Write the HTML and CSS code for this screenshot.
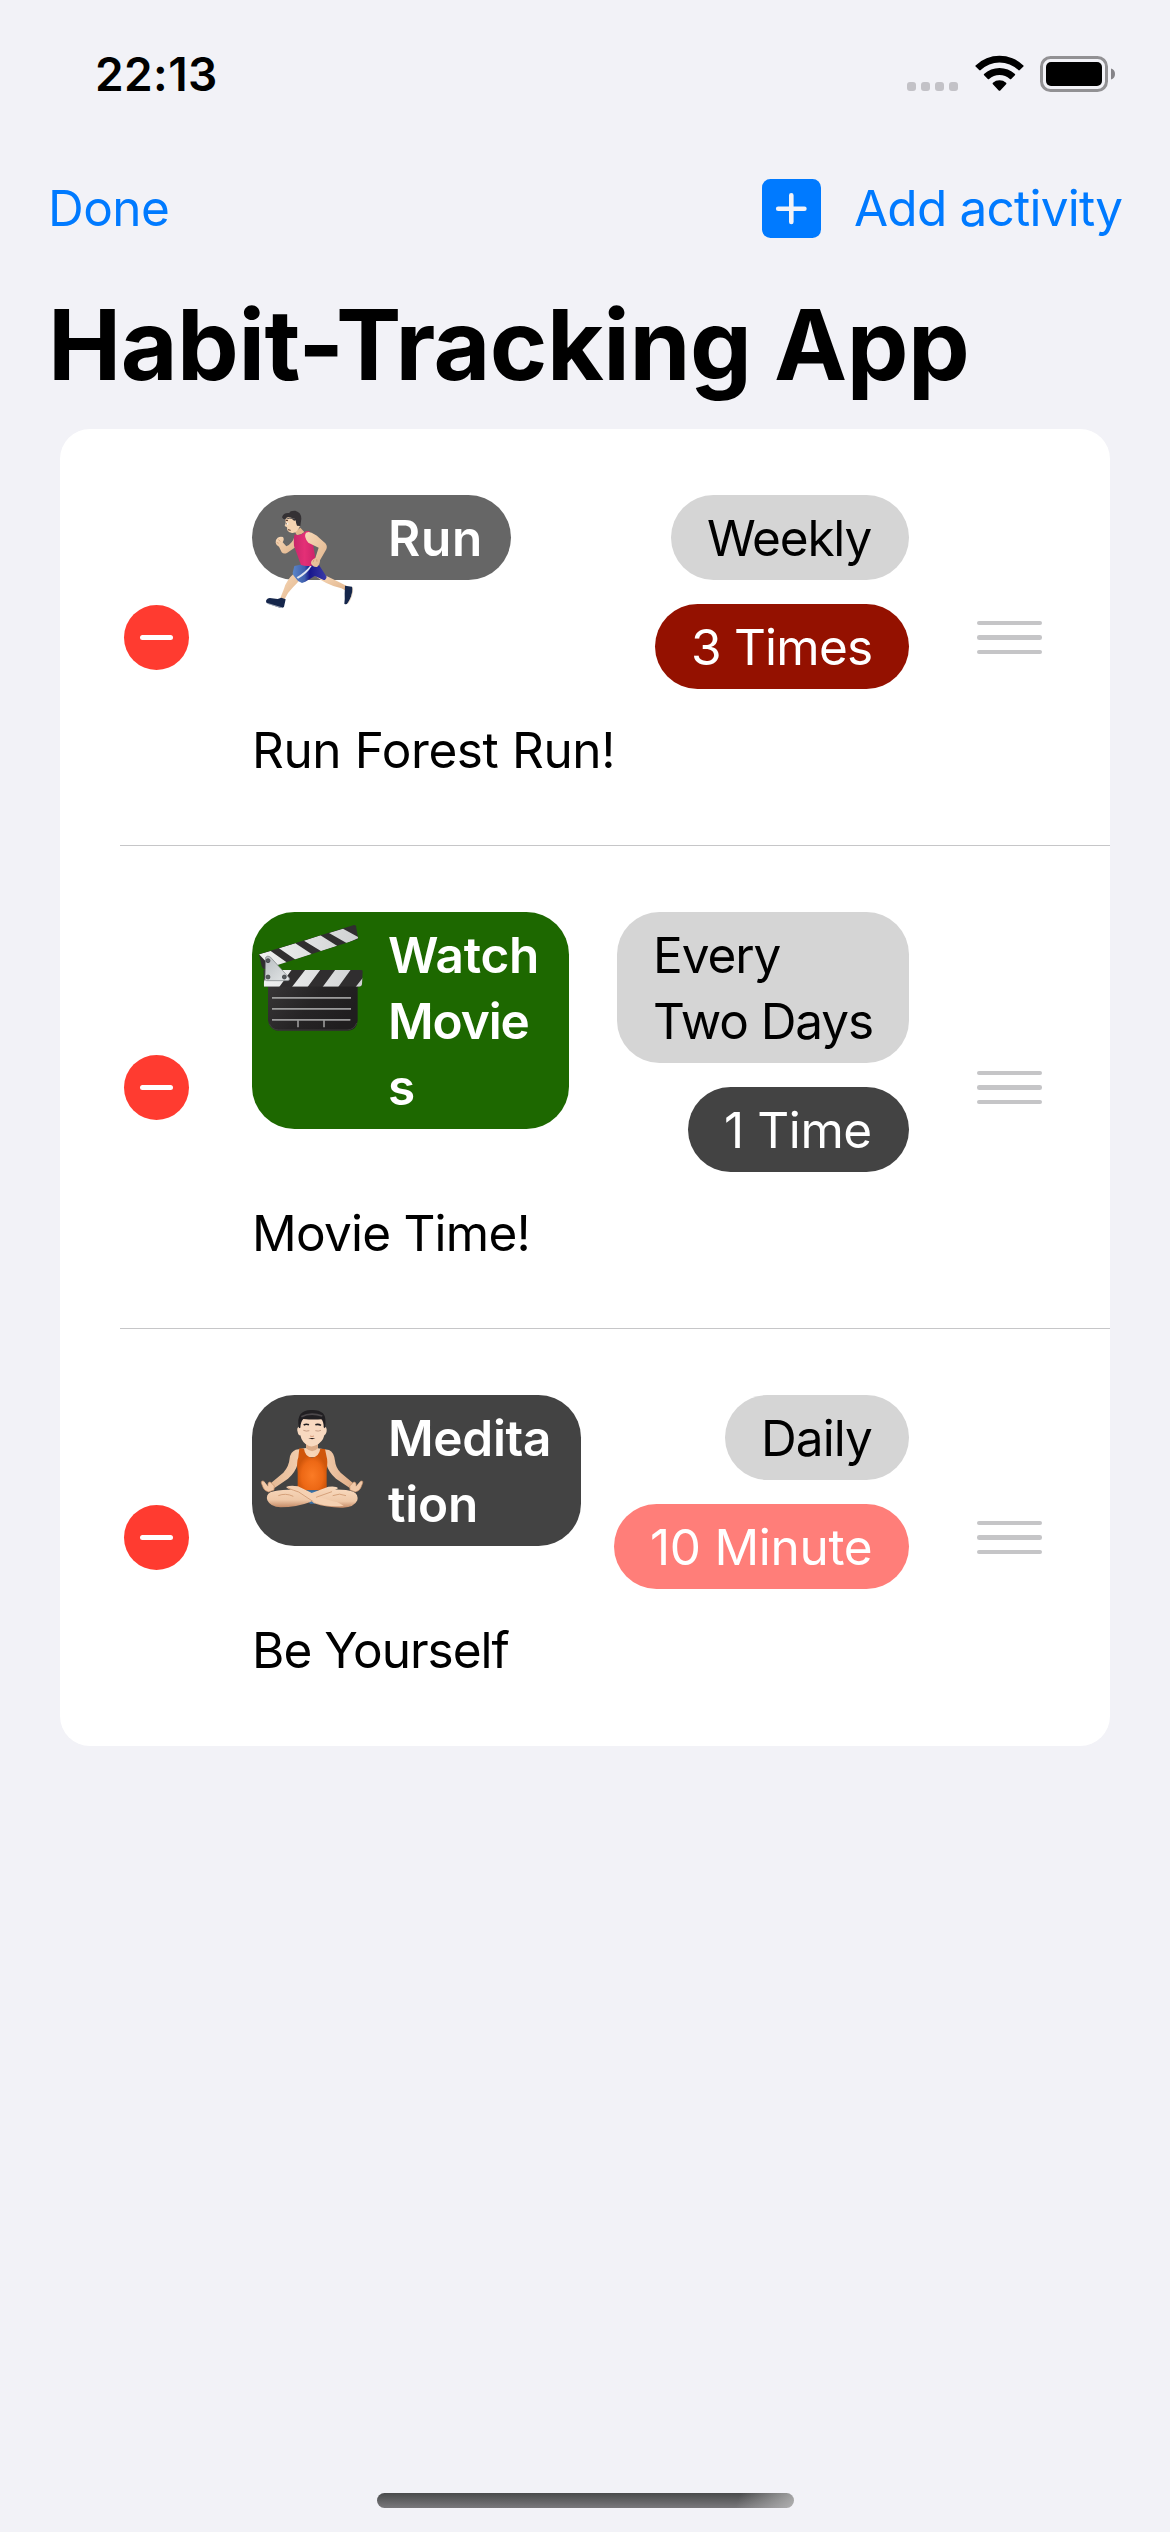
FILE: index.html
```html
<!DOCTYPE html>
<html lang="en">
<head>
<meta charset="utf-8">
<title>Habit-Tracking App</title>
<link rel="stylesheet" href="styles.css">
</head>
<body>
<div class="screen">
  <header class="status">
    <span class="time">22:13</span>
    <span class="dots"><i></i><i></i><i></i><i></i></span>
    <svg class="wifi" viewBox="0 0 49 36" width="49" height="36">
      <path d="M0.6 10.4Q0 11 .6 11.6L4.2 15.1Q5 15.7 5.7 15.1A27 27 0 0 1 43.300 15.100Q44 15.700 44.800 15.100L48.400 11.600Q49 11 48.400 10.400A34.500 34.500 0 0 0 .6 10.400Z"/>
      <path d="M9 19Q8.500 19.700 9.100 20.300L12.800 23.900Q13.400 24.500 14.100 23.900A15.500 15.500 0 0 1 34.900 23.900Q35.600 24.500 36.200 23.900L39.900 20.300Q40.500 19.700 40 19A22.800 22.800 0 0 0 9 19Z"/>
      <path d="M17.900 27.700Q17.200 28.500 17.900 29.200L23.700 35.400Q24.500 36.200 25.300 35.400L31.100 29.200Q31.800 28.500 31.100 27.700A10.500 10.500 0 0 0 17.900 27.700Z"/>
    </svg>
    <svg class="battery" viewBox="0 0 75 36" width="75" height="36">
      <rect x="1.500" y="1.500" width="65" height="33" rx="9" fill="none" stroke="#929194" stroke-width="3"/>
      <rect x="6" y="6" width="56" height="24" rx="5"/>
      <path d="M71 12.500Q75 13.800 75 18T71 23.500Z" fill="#858488"/>
    </svg>
  </header>

  <nav class="toolbar">
    <a class="done">Done</a>
    <svg class="plus" viewBox="0 0 59 59" width="59" height="59">
      <rect width="59" height="59" rx="8.500" fill="#007aff"/>
      <path d="M16.200 29.700H42.400M29.300 16.300V43" stroke="#f2f2f7" stroke-width="4.600" stroke-linecap="round"/>
    </svg>
    <a class="add">Add activity</a>
  </nav>

  <h1 class="title">Habit-Tracking App</h1>

  <main class="card">
    <section class="row">
      <span class="remove"></span>
      <div class="body">
        <div class="top">
          <div class="pill name name-run">
            <svg class="emoji" viewBox="36 45 345 345" width="115" height="115">
              <defs>
                <linearGradient id="skin" x1="0" x2="1" y1="0" y2="1"><stop offset="0" stop-color="#f8d9b8"/><stop offset="1" stop-color="#e0b48c"/></linearGradient>
                <linearGradient id="pink" x1="0" x2="1"><stop offset="0" stop-color="#c8276b"/><stop offset=".5" stop-color="#e42f76"/><stop offset="1" stop-color="#cd246a"/></linearGradient>
                <linearGradient id="shorts" x1="0" x2="1"><stop offset="0" stop-color="#5b86c8"/><stop offset=".35" stop-color="#3f5fae"/><stop offset=".5" stop-color="#17178c"/><stop offset="1" stop-color="#3c3ca8"/></linearGradient>
              </defs>
              <path d="M225 287Q256 313 304 325L318 332 322 319Q286 300 258 287Z" fill="url(#skin)"/>
              <path d="M164 278Q139 300 132 326L121 354 133 359Q144 336 159 322 171 311 183 294Z" fill="url(#skin)"/>
              <path d="M163 171Q158 190 139 199L128 187Q134 178 129 171 121 168 113 173 105 180 107 188 109 197 117 200L125 217Q132 224 142 218L166 202Z" fill="url(#skin)"/>
              <path d="M163 152Q174 151 181 143L193 156Q183 166 170 165Z" fill="#e4b88f"/>
              <path d="M163 258L158 279 160 286 174 303 186 309 196 305 224 288 251 300Q258 300 260 290L237 255Q200 247 163 258Z" fill="url(#shorts)"/>
              <path d="M210 258Q196 276 170 292L174 296Q202 281 215 258Z" fill="#dfe5f2"/>
              <path d="M164 163Q170 167 181 164 192 160 197 154L208 153 217 180 226 233Q227 253 214 257 197 259 183 255L162 198Q160 176 164 163Z" fill="url(#pink)"/>
              <path d="M206 156Q224 160 238 174L256 190Q263 198 259 208L240 241Q240 255 231 261 217 262 213 250 213 239 226 234L236 203 205 188Q190 170 198 158Z" fill="url(#skin)"/>
              <path d="M139 107Q135 119 137 129L134 138 141 142 142 151Q147 160 158 159 172 158 180 138L174 115Z" fill="#f6d5b2"/>
              <path d="M126 112Q130 97 148 99 150 91 166 92 184 97 184 116L181 138 171 137Q168 132 167 121 160 125 154 113 142 109 137 116 131 121 126 112Z" fill="#343134"/>
              <path d="M139 117Q147 113 164 116" fill="none" stroke="#5c5859" stroke-width="3"/>
              <path d="M137 121L144 122M144 149L152 151" stroke="#5a3427" stroke-width="3"/>
              <circle cx="142" cy="131" r="3" fill="#fff"/><circle cx="140" cy="131" r="1.500" fill="#432b23"/>
              <path d="M79 360Q84 352 95 355L113 357 124 353 137 358 132 380Q128 386 115 382L83 371Q76 367 79 360Z" fill="#15264b"/>
              <path d="M81 370L128 384" stroke="#d8dce2" stroke-width="2"/>
              <path d="M315 317L336 320Q340 326 337 336 335 350 326 365 319 377 313 371 315 355 314 341Z" fill="#15264b"/>
              <path d="M338 322Q340 348 323 371" fill="none" stroke="#e3cbb0" stroke-width="2"/>
              <path d="M115 179L121 184M110 187L116 190M222 239L219 247M230 238L231 245" stroke="#c79169" stroke-width="2"/>
            </svg>
            Run
          </div>
          <div class="tags">
            <div class="pill tag-weekly">Weekly</div>
            <div class="pill tag-3">3 Times</div>
          </div>
        </div>
        <p class="desc desc-run">Run Forest Run!</p>
      </div>
      <span class="handle"><i></i><i></i><i></i></span>
    </section>

    <section class="row">
      <span class="remove"></span>
      <div class="body">
        <div class="top">
          <div class="pill name name-movie">
            <svg class="emoji" viewBox="36 36 345 360" width="115" height="120">
              <defs>
                <linearGradient id="board" x1="0" x2="1" y1="0" y2=".4"><stop offset="0" stop-color="#383637"/><stop offset=".55" stop-color="#262425"/><stop offset="1" stop-color="#201e1f"/></linearGradient>
                <linearGradient id="white" x1="0" x2="1"><stop offset="0" stop-color="#f0f1f1"/><stop offset="1" stop-color="#cfd1d2"/></linearGradient>
                <linearGradient id="steel" x1="0" x2="1" y1="0" y2="1"><stop offset="0" stop-color="#b8bdc0"/><stop offset="1" stop-color="#e4e7e8"/></linearGradient>
                <clipPath id="arm"><path d="M57 163L342 75Q346 74 348 79L355 117 73 208Q68 206 65 198Z"/></clipPath>
                <clipPath id="slate"><path d="M70 210H364Q369 210 368 215L366 253Q365 260 358 260H72Z"/></clipPath>
              </defs>
              <path d="M84 255H353V362Q350 391 323 392H113Q87 389 84 361Z" fill="url(#board)"/>
              <path d="M88 371Q96 390 116 390H321Q343 389 350 369" fill="none" stroke="#494748" stroke-width="2"/>
              <g clip-path="url(#arm)">
                <rect x="50" y="65" width="315" height="150" fill="#302e2f"/>
                <path d="M57 163L92 153 144 190 100 208ZM117 145L166 130 216 163 167 179ZM192 122L241 106 292 138 244 154ZM267 99L309 86 358 113 321 130Z" fill="url(#white)"/>
              </g>
              <g clip-path="url(#slate)">
                <rect x="68" y="208" width="304" height="54" fill="#302e2f"/>
                <path d="M85 208H156L117 262H66ZM197 208H242L202 262H155ZM287 208H333L294 262H247ZM371 230V262H346Z" fill="url(#white)"/>
              </g>
              <path d="M77 172Q83 165 91 171L148 234Q151 242 142 242H80Q75 242 75 237Z" fill="url(#steel)" stroke="#777c7f" stroke-width="2"/>
              <g fill="#555a5d" stroke="#303437" stroke-width="2"><circle cx="84" cy="182" r="6"/><circle cx="84" cy="231" r="6"/><circle cx="133" cy="231" r="6"/></g>
              <path d="M96 294H333M96 327H333M96 360H331M174 360V382M252 360V382" stroke="#979696" stroke-width="5"/>
              <path d="M96 293H333M96 326H333M96 359H331" stroke="#b8b8b8" stroke-width="2"/>
            </svg>
            <span class="line1">Watch</span><br><span class="line2">Movie</span><br>s
          </div>
          <div class="tags">
            <div class="pill tag-every">Every<br>Two Days</div>
            <div class="pill tag-1">1 Time</div>
          </div>
        </div>
        <p class="desc desc-movie">Movie Time!</p>
      </div>
      <span class="handle"><i></i><i></i><i></i></span>
    </section>

    <section class="row">
      <span class="remove"></span>
      <div class="body">
        <div class="top">
          <div class="pill name name-meditation">
            <svg class="emoji" viewBox="36 45 345 345" width="115" height="115">
              <defs>
                <linearGradient id="leg" x1="0" x2="0" y1="0" y2="1"><stop offset="0" stop-color="#f8d8bc"/><stop offset=".65" stop-color="#efc8a7"/><stop offset="1" stop-color="#c48a66"/></linearGradient>
                <linearGradient id="arms" x1="0" x2="1"><stop offset="0" stop-color="#e3b792"/><stop offset=".5" stop-color="#f8d6b8"/><stop offset="1" stop-color="#dfac86"/></linearGradient>
                <radialGradient id="orange" cx=".5" cy=".65"><stop offset="0" stop-color="#fb7b25"/><stop offset=".7" stop-color="#ed6815"/><stop offset="1" stop-color="#d0560b"/></radialGradient>
              </defs>
              <path d="M198 184H234V205L267 210Q282 217 285 242 287 263 302 278L347 316 335 328 288 296Q266 278 258 249L246 232H186L174 249Q166 278 144 296L98 328 85 316 130 278Q147 260 149 235 151 216 167 209L198 204Z" fill="url(#arms)"/>
              <path d="M72 304Q63 300 64 309L69 322Q73 333 86 336L102 330 103 318 91 306Q82 305 84 319M361 304Q370 300 368 309L363 322Q359 333 346 336L330 330 329 318 341 306Q350 305 348 319" fill="#f2c9a8" stroke="#c18c67" stroke-width="2"/>
              <path d="M178 205L192 206Q195 230 216 233 237 230 241 206L255 207 260 231Q264 242 260 272V331H173V277Q169 246 175 232Z" fill="url(#orange)"/>
              <path d="M202 331H232L238 350 224 371H210L194 347Z" fill="#3770a7"/>
              <path d="M262 330Q312 326 340 335 356 343 352 361 343 382 309 383 263 384 222 370L203 354 246 330Z" fill="url(#leg)"/>
              <path d="M170 330Q119 326 91 337 77 345 82 361 91 381 122 382 169 382 211 366L233 350 275 336 294 325Q290 317 265 320L207 342Z" fill="url(#leg)"/>
              <path d="M138 321Q151 314 174 319L211 337Q248 358 293 367L311 377Q263 383 218 365L171 335Q145 329 138 321Z" fill="#f5d1b2"/>
              <path d="M144 324Q160 331 176 336L220 365M228 352L276 335M115 347Q136 338 160 349M318 347Q299 338 278 347" fill="none" stroke="#cf9870" stroke-width="2.500"/>
              <path d="M198 186Q215 207 234 186V205Q217 222 198 205Z" fill="#dcab87"/>
              <path d="M177 140Q169 143 173 156 175 167 181 166 186 190 207 198 217 201 228 196 248 187 253 166 261 160 260 148 259 140 254 141L251 115H182Z" fill="#f8d9c0"/>
              <path d="M177 145Q171 114 182 102 194 89 215 90 237 89 249 100 260 112 255 145L251 142Q251 124 244 118 219 120 190 117 182 125 181 143Z" fill="#211f22"/>
              <path d="M184 110Q212 96 247 108" fill="none" stroke="#4c484b" stroke-width="5"/>
              <path d="M191 135Q198 131 207 134M226 134Q235 131 243 136" fill="none" stroke="#242022" stroke-width="5"/>
              <path d="M190 151Q199 155 208 152M226 152Q235 155 243 151" fill="none" stroke="#ad7f67" stroke-width="2"/>
              <path d="M210 168Q216 171 222 168" fill="none" stroke="#d89b78" stroke-width="3"/>
              <path d="M205 175Q216 173 226 175 217 180 205 175Z" fill="#251817"/>
            </svg>
            <span class="line1">Medita</span><br>tion
          </div>
          <div class="tags">
            <div class="pill tag-daily">Daily</div>
            <div class="pill tag-10">10 Minute</div>
          </div>
        </div>
        <p class="desc desc-meditation">Be Yourself</p>
      </div>
      <span class="handle"><i></i><i></i><i></i></span>
    </section>
  </main>

  <div class="home"></div>
</div>
</body>
</html>
```
FILE: styles.css
```css
* { box-sizing: border-box; margin: 0; }

body {
  background: #f2f2f7;
  color: #000;
  font: 400 49.5px/66px Inter, "Liberation Sans", sans-serif;
}

.screen {
  display: flex;
  flex-direction: column;
  width: 1170px;
  height: 2532px;
}

/* status bar */
.status {
  display: flex;
  align-items: flex-start;
  height: 141px;
  padding: 55px 55px 0 95px;
}
.time {
  flex: 1;
  font-size: 46px;
  font-weight: 600;
  line-height: 39px;
  letter-spacing: .39px;
}
.dots { display: flex; gap: 5px; padding-top: 27px; margin-right: 17px; }
.dots i { width: 9px; height: 9px; border-radius: 3px; background: #c3c2c7; }
.wifi { margin-right: 16px; }
.battery { margin-top: 1px; }

/* navigation */
.toolbar {
  display: flex;
  align-items: center;
  height: 134px;
  padding: 0 47px 0 48px;
  color: #007aff;
}
.done { flex: 1; letter-spacing: -.52px; }
.plus { margin-right: 33px; }
.add { width: 269px; white-space: nowrap; letter-spacing: -.78px; }

.title {
  height: 154px;
  padding-left: 48px;
  font-size: 98px;
  font-weight: 700;
  line-height: 140px;
  letter-spacing: -.5px;
}

/* activity list */
.card {
  width: 1050px;
  margin-left: 60px;
  border-radius: 30px;
  background: #fff;
}
.row {
  position: relative;
  display: flex;
  align-items: center;
  padding: 66px 68px 63px 64px;
}
.row:not(:last-child)::after {
  content: "";
  position: absolute;
  left: 60px;
  right: 0;
  bottom: 0;
  height: 1px;
  background: #c6c6c8;
}
.remove {
  display: grid;
  place-items: center;
  width: 65px;
  height: 65px;
  margin-bottom: 3px;
  border-radius: 50%;
  background: #ff3b30;
}
.remove::before {
  content: "";
  width: 33px;
  height: 5px;
  border-radius: 2.5px;
  background: #fff;
}
.body { width: 657px; margin: 0 68px 0 63px; }
.top { display: flex; justify-content: space-between; align-items: flex-start; }
.tags { display: flex; flex-direction: column; align-items: flex-end; gap: 24px; }
.pill {
  padding: 9.5px 0 9.5px 36px;
  border-radius: 42.5px;
  white-space: nowrap;
}
.name {
  position: relative;
  padding-left: 136px;
  color: #fff;
  font-weight: 600;
}
.emoji { position: absolute; left: 0; top: 0; }
.name-run { width: 259px; background: #666; letter-spacing: .7px; }
.name-movie { width: 317px; background: #1d6800; }
.name-movie .line1 { letter-spacing: -.25px; }
.name-movie .line2 { letter-spacing: -1.1px; }
.name-meditation { width: 329px; background: #434343; letter-spacing: -.19px; }
.name-meditation .line1 { letter-spacing: -.3px; }

.tag-weekly { width: 238px; background: #d5d5d5; letter-spacing: -1.2px; }
.tag-3 { width: 254px; background: #941100; color: #fff; letter-spacing: -.78px; }
.tag-every { width: 292px; background: #d5d5d5; letter-spacing: -1.1px; }
.tag-1 { width: 221px; background: #434343; color: #fff; letter-spacing: -.4px; }
.tag-daily { width: 184px; background: #d5d5d5; letter-spacing: -.93px; }
.tag-10 { width: 295px; background: #ff7e79; color: #fff; letter-spacing: -.3px; }

.desc { margin-top: 28px; }
.desc-run { letter-spacing: -.38px; }
.desc-movie { letter-spacing: -.77px; }
.desc-meditation { letter-spacing: -1px; }

.handle {
  display: flex;
  flex-direction: column;
  gap: 10px;
  width: 65px;
  margin-bottom: 3px;
}
.handle i { height: 4.5px; border-radius: 2.25px; background: #c5c5c7; }

/* home indicator */
.home {
  width: 417px;
  height: 15px;
  margin: auto 0 24px 377px;
  border-radius: 7.5px;
  background:
    linear-gradient(110deg, transparent 86%, rgba(190, 190, 190, .8) 100%),
    linear-gradient(#4a4b4c, #79787b);
}
```
